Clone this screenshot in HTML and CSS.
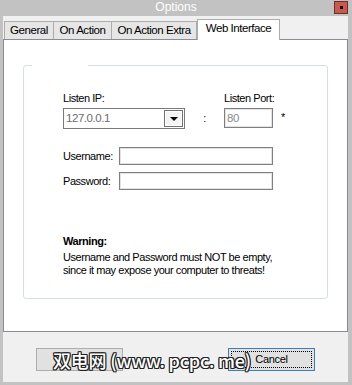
FILE: index.html
```html
<!DOCTYPE html>
<html lang="en">
<head>
    <meta charset="UTF-8">
    <title>Options</title>
    <link rel="stylesheet" href="styles.css">
</head>
<body>
    <div class="window">
        <div class="titlebar">
            <span class="title">Options</span>
            <span class="close"><i></i></span>
        </div>
        <div class="client">
            <div class="tabs">
                <span class="tab tab-general">General</span>
                <span class="tab tab-action">On Action</span>
                <span class="tab tab-extra">On Action Extra</span>
                <span class="tab tab-web active">Web Interface</span>
            </div>
            <div class="panel">
                <div class="group">
                    <div class="listen">
                        <span class="label">Listen IP:</span>
                        <span></span>
                        <span class="label">Listen Port:</span>
                        <span></span>
                        <div class="combo">
                            <span class="combo-text">127.0.0.1</span>
                            <span class="combo-btn"><i></i></span>
                        </div>
                        <span class="colon">:</span>
                        <div class="field port">80</div>
                        <span class="star">*</span>
                    </div>
                    <div class="login">
                        <span class="label">Username:</span>
                        <div class="field wide"></div>
                        <span class="label">Password:</span>
                        <div class="field wide"></div>
                    </div>
                    <div class="warning">
                        <p class="warning-title">Warning:</p>
                        <p>Username and Password must NOT be empty,</p>
                        <p>since it may expose your computer to threats!</p>
                    </div>
                </div>
            </div>
            <div class="buttons">
                <button class="btn">OK</button>
                <button class="btn focused"><span>Cancel</span></button>
                <span class="watermark">双电网 (www. pcpc. me)</span>
            </div>
        </div>
    </div>
</body>
</html>
```

FILE: styles.css
```css
* {
    margin: 0;
    padding: 0;
    box-sizing: border-box;
}
body {
    font-family: "Liberation Sans", Arial, sans-serif;
    font-size: 11px;
    letter-spacing: -0.45px;
    color: #000;
    background: #c2c2c2;
}
.window {
    width: 352px;
    height: 385px;
    background: #c2c2c2;
    display: flex;
    flex-direction: column;
}
.titlebar {
    height: 16px;
    display: flex;
    align-items: flex-start;
    padding-right: 4px;
}
.title {
    flex: 1;
    text-align: center;
    padding-left: 18px;
    color: #fff;
    font-size: 12px;
    letter-spacing: 0;
    line-height: 15px;
}
.close {
    width: 14px;
    height: 13px;
    margin-top: 1px;
    background: #c75a4e;
    border: 1px solid #6b3029;
    display: flex;
    align-items: center;
    justify-content: center;
}
.close i {
    width: 3px;
    height: 3px;
    background: #1a0a08;
}
.client {
    flex: 1;
    margin: 0 4px 3px 3px;
    background: #f0f0f0;
    display: flex;
    flex-direction: column;
}

/* tabs */
.tabs {
    height: 23px;
    display: flex;
    align-items: flex-end;
    padding-left: 1px;
}
.tab {
    height: 18px;
    border: 1px solid #acacac;
    border-bottom: none;
    background: #e6e6e6;
    text-align: center;
    line-height: 17px;
    font-size: 11.5px;
    white-space: nowrap;
}
.tab-general { width: 50px; }
.tab-action { width: 59px; margin-left: -1px; }
.tab-extra { width: 86px; margin-left: -1px; }
.tab.active {
    width: 83px;
    height: 21px;
    margin-left: 0;
    margin-bottom: -1px;
    background: #fff;
    position: relative;
    line-height: 17px;
}
.panel {
    height: 293px;
    background: #fff;
    border: 1px solid #898c95;
    padding: 25px 19px 0 19px;
}

/* group box */
.group {
    height: 234px;
    border: 1px solid #d5dfe5;
    border-radius: 3px;
    padding: 26px 0 0 39px;
    position: relative;
}
.group::before {
    content: "";
    position: absolute;
    top: -1px;
    left: 8px;
    width: 56px;
    height: 1px;
    background: #fff;
}
.label {
    line-height: 13px;
    white-space: nowrap;
}
.listen {
    display: grid;
    grid-template-columns: 122px 39px 49px auto;
    row-gap: 3px;
    align-items: center;
}
.combo {
    height: 21px;
    border: 1px solid #7a7a7a;
    display: flex;
    align-items: stretch;
    padding: 1px;
}
.combo-text {
    flex: 1;
    color: #6d6d6d;
    line-height: 17px;
    padding-left: 1px;
    font-size: 11.5px;
}
.combo-btn {
    width: 19px;
    border: 1px solid #707070;
    box-shadow: inset 0 0 0 1px #fff;
    background: #f4f4f4;
    display: flex;
    align-items: center;
    justify-content: center;
}
.combo-btn i {
    border-left: 4px solid transparent;
    border-right: 4px solid transparent;
    border-top: 4px solid #000;
}
.colon {
    text-align: center;
    line-height: 13px;
}
.field {
    border: 1px solid #7f7f7f;
    box-shadow: inset 0 0 0 1px #e3e3e3;
    background: #fff;
}
.port {
    height: 20px;
    align-self: start;
    color: #8a8a8a;
    line-height: 18px;
    padding-left: 2px;
    font-size: 11.5px;
}
.star {
    margin-left: 8px;
    line-height: 13px;
    margin-top: -2px;
}
.login {
    display: grid;
    grid-template-columns: 56px 154px;
    row-gap: 7px;
    align-items: center;
    margin-top: 18px;
}
.wide {
    height: 18px;
}
.warning {
    margin-top: 45px;
    line-height: 13px;
}
.warning-title {
    font-weight: bold;
    margin-bottom: 3px;
}

/* dialog buttons */
.buttons {
    flex: 1;
    display: flex;
    align-items: flex-start;
    padding: 16px 0 0 33px;
    position: relative;
}
.btn {
    width: 87px;
    height: 23px;
    font-family: "Liberation Sans", Arial, sans-serif;
    font-size: 11px;
    letter-spacing: -0.3px;
    color: #000;
    background: #e1e1e1;
    border: 1px solid #adadad;
}
.btn.focused {
    margin-left: 105px;
    border-color: #3c7fb1;
    padding: 2px;
}
.btn.focused span {
    display: block;
    height: 100%;
    border: 1px dotted #000;
    line-height: 15px;
}
.watermark {
    position: absolute;
    left: 50px;
    top: 17px;
    font-family: "Noto Sans CJK SC", sans-serif;
    font-size: 18px;
    font-weight: 500;
    letter-spacing: -0.2px;
    line-height: 22px;
    color: #fff;
    text-shadow: 1px 0 #222, -1px 0 #222, 0 1px #222, 0 -1px #222,
        1px 1px #222, -1px -1px #222, 1px -1px #222, -1px 1px #222;
    white-space: nowrap;
}
```
